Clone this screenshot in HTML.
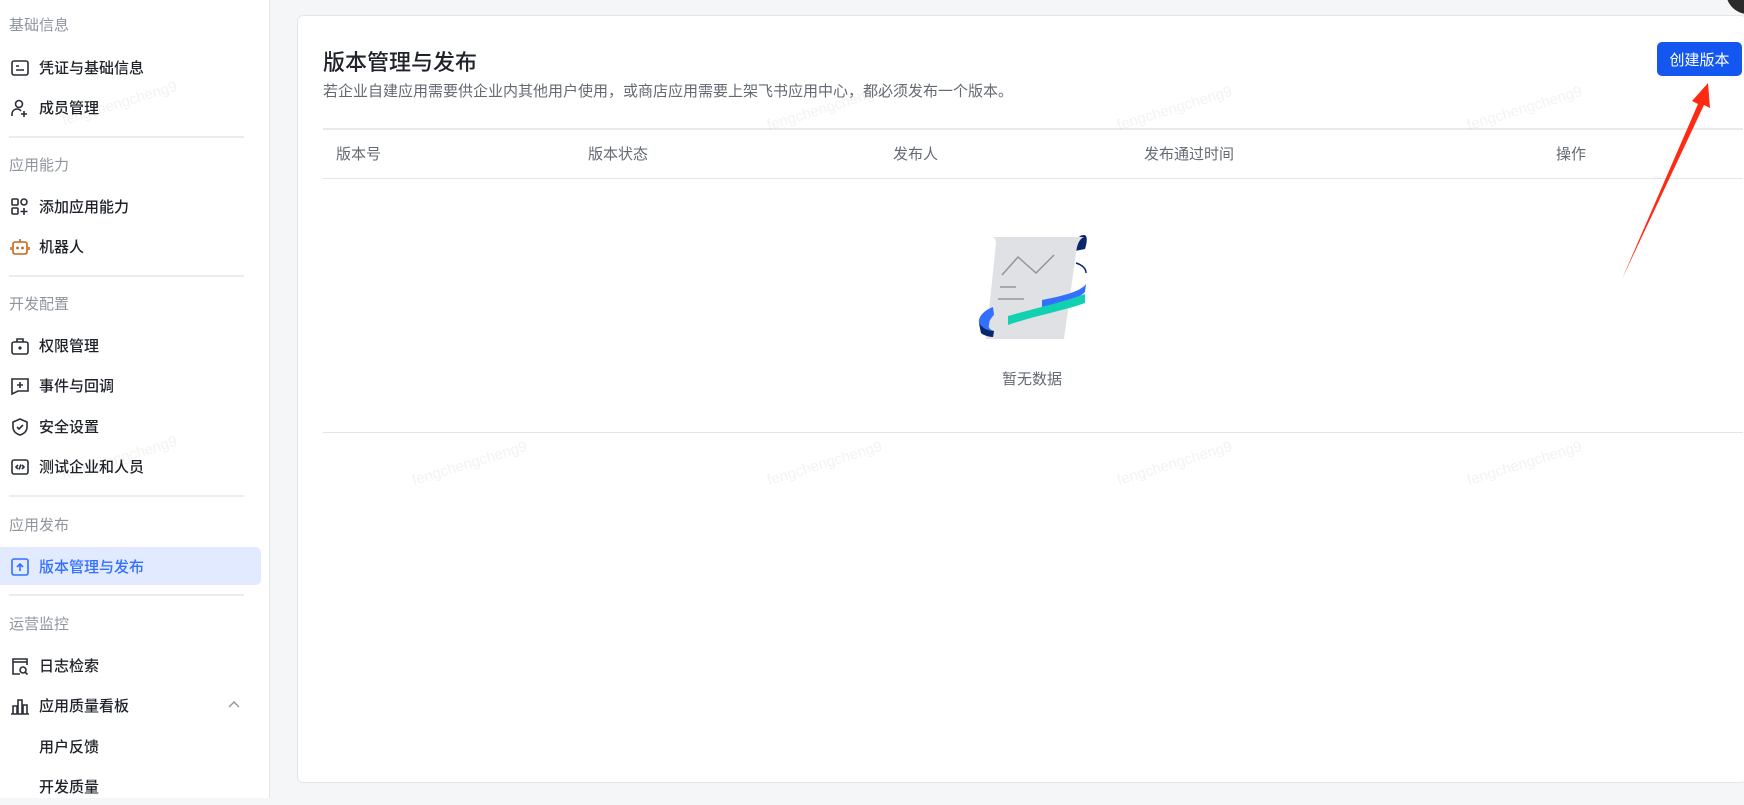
<!DOCTYPE html>
<html><head><meta charset="utf-8"><style>
*{margin:0;padding:0;box-sizing:border-box}
body{width:1744px;height:798px;overflow:hidden;background:#f5f6f7;font-family:"Liberation Sans","Noto Sans CJK SC",sans-serif;position:relative}
.side{position:absolute;left:0;top:0;width:270px;height:798px;background:#fff;border-right:1px solid #e4e5e7}
.g{position:absolute;left:9px;font-size:15px;color:#8f959e;line-height:20px}
.it{position:absolute;left:0;width:261px;height:38px;font-size:15px;color:#1f2329;display:flex;align-items:center;padding-left:39px;font-weight:500}
.it svg{position:absolute;left:10px;top:10px}
.it.on{background:#e1eaff;color:#3370ff;border-radius:0 5px 5px 0}
.dv{position:absolute;left:9px;width:235px;height:2px;background:#ececee}
.card{position:absolute;left:297px;top:15px;width:1450px;height:768px;background:#fff;border:1px solid #e4e5e7;border-radius:6px}
.wm{position:absolute;font-size:15px;color:rgba(0,0,0,0.05);transform:rotate(-17deg);white-space:nowrap}
</style></head><body>
<div class="side">
<div class="g" style="top:16px">基础信息</div>
<div class="it" style="top:48px"><svg width="20" height="20" viewBox="0 0 20 20" fill="none" stroke="#2b2f36" stroke-width="1.6"><rect x="2" y="3" width="16" height="14" rx="2"/><path d="M6 8h3M6 12h8"/></svg>凭证与基础信息</div>
<div class="it" style="top:88px"><svg width="20" height="20" viewBox="0 0 20 20" fill="none" stroke="#2b2f36" stroke-width="1.6"><circle cx="9" cy="6" r="3.5"/><path d="M2 18v-2a5 5 0 0 1 9-3M14 13v6M11 16h6"/></svg>成员管理</div>
<div class="dv" style="top:136px"></div>
<div class="g" style="top:156px">应用能力</div>
<div class="it" style="top:187px"><svg width="20" height="20" viewBox="0 0 20 20" fill="none" stroke="#2b2f36" stroke-width="1.6"><rect x="2" y="2" width="6" height="6" rx="1"/><rect x="11" y="2" width="6" height="6" rx="3"/><rect x="2" y="11" width="6" height="6" rx="1"/><path d="M14 11v7M10.5 14.5h7"/></svg>添加应用能力</div>
<div class="it" style="top:227px"><svg width="20" height="20" viewBox="0 0 20 20" fill="none" stroke="#c5661a" stroke-width="1.6"><rect x="3" y="5" width="14" height="12" rx="2"/><path d="M10 2v3M1 10v3M19 10v3"/><circle cx="7.5" cy="11" r=".6" fill="#c5661a"/><circle cx="12.5" cy="11" r=".6" fill="#c5661a"/></svg>机器人</div>
<div class="dv" style="top:275px"></div>
<div class="g" style="top:295px">开发配置</div>
<div class="it" style="top:326px"><svg width="20" height="20" viewBox="0 0 20 20" fill="none" stroke="#2b2f36" stroke-width="1.6"><rect x="2" y="6" width="16" height="12" rx="2"/><path d="M7 6V3h6v3"/><circle cx="10" cy="12" r=".8" fill="#2b2f36"/></svg>权限管理</div>
<div class="it" style="top:366px"><svg width="20" height="20" viewBox="0 0 20 20" fill="none" stroke="#2b2f36" stroke-width="1.6"><path d="M2 3h16v12H8l-6 3z"/><path d="M10 6v6M7 9h6"/></svg>事件与回调</div>
<div class="it" style="top:407px"><svg width="20" height="20" viewBox="0 0 20 20" fill="none" stroke="#2b2f36" stroke-width="1.6"><path d="M10 2l7 3v5c0 4-3 7-7 8-4-1-7-4-7-8V5z"/><path d="M7 10l2 2 4-4"/></svg>安全设置</div>
<div class="it" style="top:447px"><svg width="20" height="20" viewBox="0 0 20 20" fill="none" stroke="#2b2f36" stroke-width="1.6"><rect x="2" y="3" width="16" height="14" rx="2"/><path d="M8 8l-2 2 2 2M12 8l2 2-2 2M10.8 7.5l-1.6 5"/></svg>测试企业和人员</div>
<div class="dv" style="top:495px"></div>
<div class="g" style="top:516px">应用发布</div>
<div class="it on" style="top:547px"><svg width="20" height="20" viewBox="0 0 20 20" fill="none" stroke="#3370ff" stroke-width="1.6"><rect x="2" y="2" width="16" height="16" rx="2"/><path d="M10 14V7M7 10l3-3 3 3"/></svg>版本管理与发布</div>
<div class="dv" style="top:594px"></div>
<div class="g" style="top:615px">运营监控</div>
<div class="it" style="top:646px"><svg width="20" height="20" viewBox="0 0 20 20" fill="none" stroke="#2b2f36" stroke-width="1.6"><path d="M17 9V3H3v15h7"/><path d="M3 6h14"/><circle cx="13" cy="14" r="3"/><path d="M15 16l2.5 2.5"/></svg>日志检索</div>
<div class="it" style="top:686px"><svg width="20" height="20" viewBox="0 0 20 20" fill="none" stroke="#2b2f36" stroke-width="1.6"><path d="M1 18h18M3 18v-8h4v8M8 18V4h4v14M13 18V9h4v9"/></svg>应用质量看板<svg style="left:228px;top:14px" width="12" height="8" viewBox="0 0 12 8" fill="none" stroke="#8f959e" stroke-width="1.4"><path d="M1 7l5-5 5 5"/></svg></div>
<div class="it" style="top:727px">用户反馈</div>
<div class="it" style="top:767px">开发质量</div>
</div>
<div class="card">
<div style="position:absolute;left:25px;top:29px;font-size:22px;color:#1f2329;font-weight:500">版本管理与发布</div>
<div style="position:absolute;left:25px;top:64px;font-size:15px;color:#646a73">若企业自建应用需要供企业内其他用户使用，或商店应用需要上架飞书应用中心，都必须发布一个版本。</div>
<div style="position:absolute;left:1359px;top:26px;width:85px;height:34px;background:#1456f0;border-radius:5px;color:#fff;font-size:15px;display:flex;align-items:center;justify-content:center">创建版本</div>
<div style="position:absolute;left:25px;top:112px;width:1420px;height:2px;background:#e8e9eb"></div>
<div style="position:absolute;left:25px;top:162px;width:1420px;height:1px;background:#e4e5e7"></div>
<div style="position:absolute;top:127px;left:0;font-size:15px;color:#646a73;width:1450px">
<span style="position:absolute;left:38px">版本号</span><span style="position:absolute;left:290px">版本状态</span><span style="position:absolute;left:595px">发布人</span><span style="position:absolute;left:846px">发布通过时间</span><span style="position:absolute;left:1258px">操作</span></div>
<svg style="position:absolute;left:674px;top:219px" width="120" height="106" viewBox="0 0 120 106">
<path d="M112 0c-6 0-9 6-9 16l10-2c2-6 3-14-1-14z" fill="#0b2769"/>
<path d="M20 2h92c-5 2-7 8-8 16l-12 86H14L24 8c0-4-2-6-4-6z" fill="#dfe1e4"/>
<path d="M30 40l16-18 18 16 18-18" fill="none" stroke="#8f959e" stroke-width="1.5"/>
<path d="M28 52h16M26 64h26" stroke="#a5a9b0" stroke-width="2"/>
<path d="M104 28c6 2 10 5 10 10" fill="none" stroke="#0b2769" stroke-width="1.5"/>
<path d="M70 65c20-4 38-8 44-16l-1 8c-8 8-24 12-43 15z" fill="#3370ff"/>
<path d="M36 81c28-8 56-14 77-22v9c-22 8-48 12-77 22z" fill="#11d1b0"/>
<path d="M21 72c-8 3-15 9-14 16l2 10c2 2 8 4 12 4l1-6c-4-1-6-4-5-6 0-5 3-8 5-10z" fill="#3370ff"/>
<path d="M7 88l2 10c2 2 8 4 12 4l1-6c-6 0-12-3-15-8z" fill="#0b2769"/>
</svg>
<div style="position:absolute;left:0;width:1468px;text-align:center;top:352px;font-size:15px;color:#646a73">暂无数据</div>
<div style="position:absolute;left:25px;top:416px;width:1420px;height:1px;background:#e4e5e7"></div>
</div>
<svg style="position:absolute;left:0;top:0" width="1744" height="798"><path d="M1622 279L1698 104l-6-3 16-18 2 25-6-3z" fill="#ff2a12"/><circle cx="1748" cy="-8" r="22" fill="#2b2b2b"/></svg>
<div class="wm" style="left:60px;top:95px">fengchengcheng9</div>
<div class="wm" style="left:410px;top:455px">fengchengcheng9</div>
<div class="wm" style="left:765px;top:455px">fengchengcheng9</div>
<div class="wm" style="left:1115px;top:455px">fengchengcheng9</div>
<div class="wm" style="left:1465px;top:455px">fengchengcheng9</div>
<div class="wm" style="left:765px;top:100px">fengchengcheng9</div>
<div class="wm" style="left:1115px;top:100px">fengchengcheng9</div>
<div class="wm" style="left:1465px;top:100px">fengchengcheng9</div>
<div class="wm" style="left:60px;top:450px">fengchengcheng9</div>
</body></html>
